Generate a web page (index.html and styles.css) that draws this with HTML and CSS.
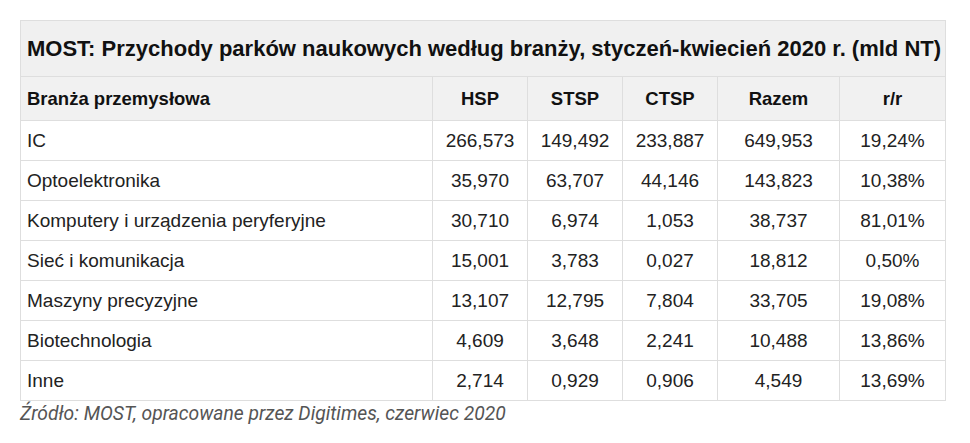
FILE: index.html
```html
<!DOCTYPE html>
<html lang="pl">
<head>
<meta charset="utf-8">
<link rel="stylesheet" href="styles.css">
</head>
<body>
<div class="wrap">
<table class="data">
  <colgroup>
    <col class="c1"><col class="c2"><col class="c3"><col class="c4"><col class="c5"><col class="c6">
  </colgroup>
  <thead>
    <tr class="title-row"><th colspan="6">MOST: Przychody parków naukowych według branży, styczeń-kwiecień 2020 r. (mld NT)</th></tr>
    <tr class="head-row"><th class="name">Branża przemysłowa</th><th>HSP</th><th>STSP</th><th>CTSP</th><th>Razem</th><th>r/r</th></tr>
  </thead>
  <tbody>
    <tr><td class="name">IC</td><td>266,573</td><td>149,492</td><td>233,887</td><td>649,953</td><td>19,24%</td></tr>
    <tr><td class="name">Optoelektronika</td><td>35,970</td><td>63,707</td><td>44,146</td><td>143,823</td><td>10,38%</td></tr>
    <tr><td class="name">Komputery i urządzenia peryferyjne</td><td>30,710</td><td>6,974</td><td>1,053</td><td>38,737</td><td>81,01%</td></tr>
    <tr><td class="name">Sieć i komunikacja</td><td>15,001</td><td>3,783</td><td>0,027</td><td>18,812</td><td>0,50%</td></tr>
    <tr><td class="name">Maszyny precyzyjne</td><td>13,107</td><td>12,795</td><td>7,804</td><td>33,705</td><td>19,08%</td></tr>
    <tr><td class="name">Biotechnologia</td><td>4,609</td><td>3,648</td><td>2,241</td><td>10,488</td><td>13,86%</td></tr>
    <tr><td class="name">Inne</td><td>2,714</td><td>0,929</td><td>0,906</td><td>4,549</td><td>13,69%</td></tr>
  </tbody>
</table>
<p class="source">Źródło: MOST, opracowane przez Digitimes, czerwiec 2020</p>
</div>
</body>
</html>
```
FILE: styles.css
```css
html, body { margin: 0; padding: 0; background: #fff; }
.wrap { padding: 20px 0 0 20px; }
.data {
  border-collapse: collapse;
  table-layout: fixed;
  width: 926px;
  font-family: "Liberation Sans", Arial, sans-serif;
  font-size: 19px;
  color: #222;
}
.c1 { width: 412px; }
.c2, .c3, .c4 { width: 95px; }
.c5 { width: 122px; }
.c6 { width: 106px; }
.data th, .data td {
  border: 1px solid #dedede;
  text-align: center;
  padding: 0 6px;
  white-space: nowrap;
}
.title-row th {
  background: #f0f0f0;
  height: 55px;
  font-size: 22px;
  text-align: left;
  padding: 0 0 0 6px;
  color: #111;
}
.head-row th {
  background: #f1f1f1;
  height: 43px;
  font-size: 18.5px;
  color: #111;
}
.data tbody td { height: 39px; }
.data .name { text-align: left; }
.source {
  margin: 1px 0 0 0;
  font-family: Roboto, "Liberation Sans", sans-serif;
  font-style: italic;
  font-size: 19.3px;
  color: #555;
}
```
